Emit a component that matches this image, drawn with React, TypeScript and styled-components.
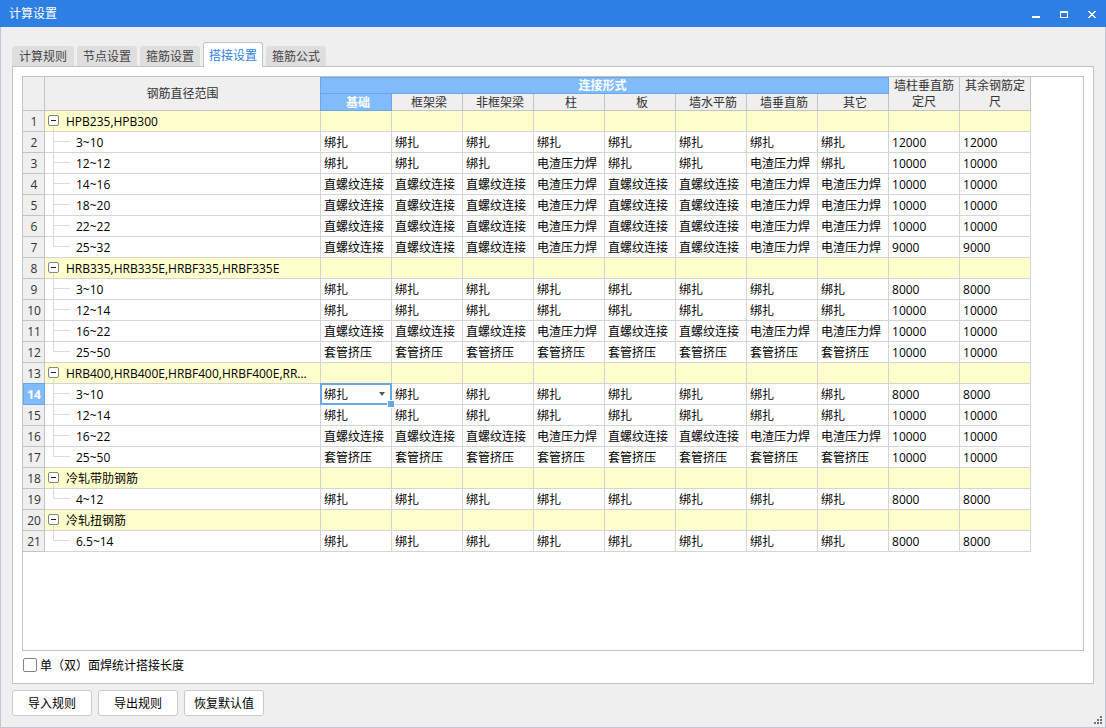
import React from "react";
import styled, { createGlobalStyle, css } from "styled-components";

const color = {
  title: "#2d7fe3",
  accent: "#2d7fe3",
  window: "#efefef",
  windowEdge: "#c0c6d4",
  line: "#c3c3c3",
  grid: "#d5d5d5",
  group: "#ffffce",
  selected: "#80bbfc",
  selectedEdge: "#69a7e6",
  text: "#000000",
  headText: "#333333",
};

const GlobalStyle = createGlobalStyle`
  * { box-sizing: border-box; }
  body {
    margin: 0;
    font: 12px/17px "Open Sans", "Noto Sans CJK SC", sans-serif;
    color: ${color.text};
  }
  button, select, input { font: inherit; color: inherit; }
`;

const Dialog = styled.div`
  min-height: 100vh;
  display: flex;
  flex-direction: column;
  background: ${color.window};
`;

const TitleBar = styled.header`
  height: 27px;
  display: flex;
  align-items: center;
  justify-content: space-between;
  padding: 0 6px 0 9px;
  background: ${color.title};
  color: #fff;
`;

const Title = styled.h1`
  margin: 0;
  font-size: 12px;
  font-weight: 400;
`;

const WindowButtons = styled.div`
  display: flex;
  gap: 12px;
`;

const WindowButton = styled.button`
  width: 16px;
  height: 16px;
  padding: 0;
  border: 0;
  background: none;
  display: flex;
  align-items: center;
  justify-content: center;
`;

const Body = styled.main`
  flex: 1;
  display: flex;
  flex-direction: column;
  padding: 15px 11px 11px;
  border: 1px solid ${color.windowEdge};
  border-top: 0;
`;

const Tabs = styled.div`
  display: flex;
  align-items: flex-end;
  gap: 3px;
  position: relative;
`;

const Tab = styled.button<{ $active?: boolean }>`
  width: 60px;
  height: 20px;
  padding: 0;
  border: 0;
  border-radius: 3px 3px 0 0;
  background: #dedede;
  color: #444;
  white-space: nowrap;
  &:first-child {
    width: 62px;
  }
  ${(p) =>
    p.$active &&
    css`
      height: 25px;
      margin-bottom: -1px;
      border: 1px solid #c3c4cc;
      border-bottom: 0;
      background: #fff;
      color: ${color.accent};
    `}
`;

const Panel = styled.section`
  flex: 1;
  display: flex;
  flex-direction: column;
  padding: 9px 9px 0;
  border: 1px solid ${color.line};
  background: #fff;
`;

const GridFrame = styled.div`
  flex: 1;
  border: 1px solid ${color.line};
`;

const Table = styled.table`
  table-layout: fixed;
  width: 1008px;
  border-collapse: separate;
  border-spacing: 0;
`;

const Col = styled.col<{ $width: number }>`
  width: ${(p) => p.$width}px;
`;

const selectedHead = css`
  position: relative;
  background: ${color.selected};
  color: #fff;
  font-weight: 700;
  &::after {
    content: "";
    position: absolute;
    border: 1px solid ${color.selectedEdge};
  }
`;

const HeadCell = styled.th<{ $selected?: boolean }>`
  height: 17px;
  padding: 1px 4px 0 0;
  border: solid ${color.line};
  border-width: 0 1px 1px 0;
  background: ${color.window};
  color: ${color.headText};
  font-weight: 400;
  line-height: 15px;
  ${(p) => p.$selected && selectedHead}
  &::after {
    inset: 0 -1px -1px -1px;
  }
`;

const FieldHead = styled(HeadCell)`
  padding: 1px 0 0 4px;
  &&::after {
    top: -1px;
  }
`;

const WideHead = styled(HeadCell)`
  padding: 1px 4px 0;
  line-height: 16px;
`;

const RowHead = styled.th<{ $selected?: boolean }>`
  height: 21px;
  padding: 0 0 0 1px;
  border: solid ${color.line};
  border-width: 0 1px 1px 0;
  background: ${color.window};
  color: ${color.headText};
  font-weight: 400;
  ${(p) => p.$selected && selectedHead}
  &::after {
    inset: -1px -1px -1px 0;
  }
`;

const Row = styled.tr<{ $group?: boolean }>`
  background: ${(p) => (p.$group ? color.group : "#fff")};
`;

const Cell = styled.td`
  height: 21px;
  padding: 0 0 0 3px;
  border: solid ${color.grid};
  border-width: 0 1px 1px 0;
  white-space: nowrap;
`;

const EditCell = styled(Cell)`
  position: relative;
`;

const TreeItem = styled.div`
  height: 20px;
  display: flex;
  align-items: center;
  gap: 7px;
`;

const LeafItem = styled(TreeItem)`
  gap: 6px;
  padding-left: 5px;
`;

const Toggle = styled.button`
  flex: none;
  width: 11px;
  height: 20px;
  padding: 0;
  border: 0;
  background: none;
  display: flex;
`;

const Editor = styled.div`
  position: absolute;
  inset: -1px -1px -1px -1px;
  border: 2px solid ${color.selectedEdge};
  background: #fff;
  display: flex;
  align-items: center;
  z-index: 1;
  &::after {
    content: "";
    position: absolute;
    right: -5px;
    bottom: -5px;
    width: 6px;
    height: 6px;
    border: 1px solid #fff;
    background: ${color.selectedEdge};
  }
`;

const Select = styled.select`
  width: 100%;
  height: 18px;
  padding: 0 0 0 2px;
  border: 0;
  outline: 0;
  background: none;
  appearance: none;
`;

const Arrow = styled.svg`
  position: absolute;
  right: 5px;
  top: 7px;
  pointer-events: none;
`;

const CheckRow = styled.label`
  height: 32px;
  padding-bottom: 4px;
  display: flex;
  align-items: center;
  gap: 3px;
`;

const CheckBox = styled.input`
  appearance: none;
  width: 14px;
  height: 14px;
  margin: 0 0 0 1px;
  border: 1px solid #858585;
  border-radius: 2px;
  background: #fff;
  &:checked {
    background: ${color.accent};
  }
`;

const Actions = styled.footer`
  display: flex;
  gap: 6px;
  padding-top: 6px;
`;

const ActionButton = styled.button`
  width: 80px;
  height: 26px;
  padding: 0;
  border: 1px solid #cbcbcb;
  border-radius: 3px;
  background: #fff;
`;

const Grip = styled.svg`
  position: fixed;
  right: 4px;
  bottom: 4px;
`;

const B = "绑扎";
const Z = "直螺纹连接";
const D = "电渣压力焊";
const T = "套管挤压";

const allTied = [B, B, B, B, B, B, B, B];
const tiedOrWelded = [B, B, B, D, B, B, D, B];
const threaded = [Z, Z, Z, D, Z, Z, D, D];
const sleeved = [T, T, T, T, T, T, T, T];

type Leaf = { range: string; joints: string[]; length: string };
type Group = { name: string; rows: Leaf[] };

const leaf = (range: string, joints: string[], length: string): Leaf => ({ range, joints, length });

const groups: Group[] = [
  {
    name: "HPB235,HPB300",
    rows: [
      leaf("3~10", allTied, "12000"),
      leaf("12~12", tiedOrWelded, "10000"),
      leaf("14~16", threaded, "10000"),
      leaf("18~20", threaded, "10000"),
      leaf("22~22", threaded, "10000"),
      leaf("25~32", threaded, "9000"),
    ],
  },
  {
    name: "HRB335,HRB335E,HRBF335,HRBF335E",
    rows: [
      leaf("3~10", allTied, "8000"),
      leaf("12~14", allTied, "10000"),
      leaf("16~22", threaded, "10000"),
      leaf("25~50", sleeved, "10000"),
    ],
  },
  {
    name: "HRB400,HRB400E,HRBF400,HRBF400E,RR...",
    rows: [
      leaf("3~10", allTied, "8000"),
      leaf("12~14", allTied, "10000"),
      leaf("16~22", threaded, "10000"),
      leaf("25~50", sleeved, "10000"),
    ],
  },
  { name: "冷轧带肋钢筋", rows: [leaf("4~12", allTied, "8000")] },
  { name: "冷轧扭钢筋", rows: [leaf("6.5~14", allTied, "8000")] },
];

const fields = ["基础", "框架梁", "非框架梁", "柱", "板", "墙水平筋", "墙垂直筋", "其它"];
const tabs = ["计算规则", "节点设置", "箍筋设置", "搭接设置", "箍筋公式"];
const actions = ["导入规则", "导出规则", "恢复默认值"];
const columnWidths = [22, 276, 71, 71, 71, 71, 71, 71, 71, 71, 71, 71];
const SELECTED_ROW = 14;

const ToggleIcon = () => (
  <svg width="11" height="20" viewBox="0 0 11 20" aria-hidden="true">
    <rect x="0.5" y="4.5" width="10" height="10" rx="1.5" fill="#fff" stroke="#858585" />
    <path d="M3 9.5h5" stroke="#222" />
    <path d="M5.5 16v4" stroke="#dcdcdc" />
  </svg>
);

const Branch = ({ last }: { last: boolean }) => (
  <svg width="17" height="20" viewBox="0 0 17 20" aria-hidden="true">
    <path d={last ? "M0.5 0v9.5h16.5" : "M0.5 0v20M0.5 9.5h16.5"} fill="none" stroke="#dcdcdc" />
  </svg>
);

const JointEditor = ({ value, label }: { value: string; label: string }) => (
  <Editor>
    <Select defaultValue={value} aria-label={label}>
      {[B, Z, D, T].map((o) => (
        <option key={o}>{o}</option>
      ))}
    </Select>
    <Arrow width="6" height="4" viewBox="0 0 6 4" aria-hidden="true">
      <path d="M0 0h6L3 4z" fill="#555" />
    </Arrow>
  </Editor>
);

export default function App() {
  let rowNumber = 0;
  return (
    <Dialog>
      <GlobalStyle />
      <TitleBar>
        <Title>计算设置</Title>
        <WindowButtons>
          <WindowButton aria-label="最小化">
            <svg width="8" height="8" viewBox="0 0 8 8">
              <path d="M0 6h8v2H0z" fill="#fff" />
            </svg>
          </WindowButton>
          <WindowButton aria-label="最大化">
            <svg width="8" height="8" viewBox="0 0 8 8">
              <path d="M0 1h8v7H0zM1 3v4h6V3z" fill="#fff" fillRule="evenodd" />
            </svg>
          </WindowButton>
          <WindowButton aria-label="关闭">
            <svg width="8" height="8" viewBox="0 0 8 8" shapeRendering="crispEdges">
              <path
                d="M0 1h2v1h1v1h2V2h1V1h2v1H7v1H6v1H5v1h1v1h1v1h1v1H6V7H5V6H3v1H2v1H0V7h1V6h1V5h1V4H2V3H1V2H0z"
                fill="#fff"
              />
            </svg>
          </WindowButton>
        </WindowButtons>
      </TitleBar>
      <Body>
        <Tabs role="tablist">
          {tabs.map((t) => (
            <Tab key={t} role="tab" aria-selected={t === "搭接设置"} $active={t === "搭接设置"}>
              {t}
            </Tab>
          ))}
        </Tabs>
        <Panel>
          <GridFrame>
            <Table>
              <colgroup>
                {columnWidths.map((w, i) => (
                  <Col key={i} $width={w} />
                ))}
              </colgroup>
              <thead>
                <tr>
                  <HeadCell rowSpan={2} />
                  <WideHead rowSpan={2}>钢筋直径范围</WideHead>
                  <HeadCell colSpan={8} $selected>
                    连接形式
                  </HeadCell>
                  <WideHead rowSpan={2}>墙柱垂直筋定尺</WideHead>
                  <WideHead rowSpan={2}>其余钢筋定尺</WideHead>
                </tr>
                <tr>
                  {fields.map((f, i) => (
                    <FieldHead key={f} $selected={i === 0}>
                      {f}
                    </FieldHead>
                  ))}
                </tr>
              </thead>
              <tbody>
                {groups.map((g) => {
                  rowNumber += 1;
                  return (
                    <React.Fragment key={g.name}>
                      <Row $group>
                        <RowHead>{rowNumber}</RowHead>
                        <Cell>
                          <TreeItem>
                            <Toggle aria-label="折叠">
                              <ToggleIcon />
                            </Toggle>
                            {g.name}
                          </TreeItem>
                        </Cell>
                        {columnWidths.slice(2).map((_, i) => (
                          <Cell key={i} />
                        ))}
                      </Row>
                      {g.rows.map((r, ri) => {
                        rowNumber += 1;
                        const selected = rowNumber === SELECTED_ROW;
                        return (
                          <Row key={r.range}>
                            <RowHead $selected={selected}>{rowNumber}</RowHead>
                            <Cell>
                              <LeafItem>
                                <Branch last={ri === g.rows.length - 1} />
                                {r.range}
                              </LeafItem>
                            </Cell>
                            {r.joints.map((j, i) =>
                              selected && i === 0 ? (
                                <EditCell key={i}>
                                  <JointEditor value={j} label={fields[i]} />
                                </EditCell>
                              ) : (
                                <Cell key={i}>{j}</Cell>
                              )
                            )}
                            <Cell>{r.length}</Cell>
                            <Cell>{r.length}</Cell>
                          </Row>
                        );
                      })}
                    </React.Fragment>
                  );
                })}
              </tbody>
            </Table>
          </GridFrame>
          <CheckRow>
            <CheckBox type="checkbox" />
            单（双）面焊统计搭接长度
          </CheckRow>
        </Panel>
        <Actions>
          {actions.map((a) => (
            <ActionButton key={a}>{a}</ActionButton>
          ))}
        </Actions>
      </Body>
      <Grip width="8" height="8" viewBox="0 0 8 8" aria-hidden="true">
        <path d="M6 0h2v2H6zM3 3h2v2H3zM6 3h2v2H6zM0 6h2v2H0zM3 6h2v2H3zM6 6h2v2H6z" fill="#70707c" />
      </Grip>
    </Dialog>
  );
}
